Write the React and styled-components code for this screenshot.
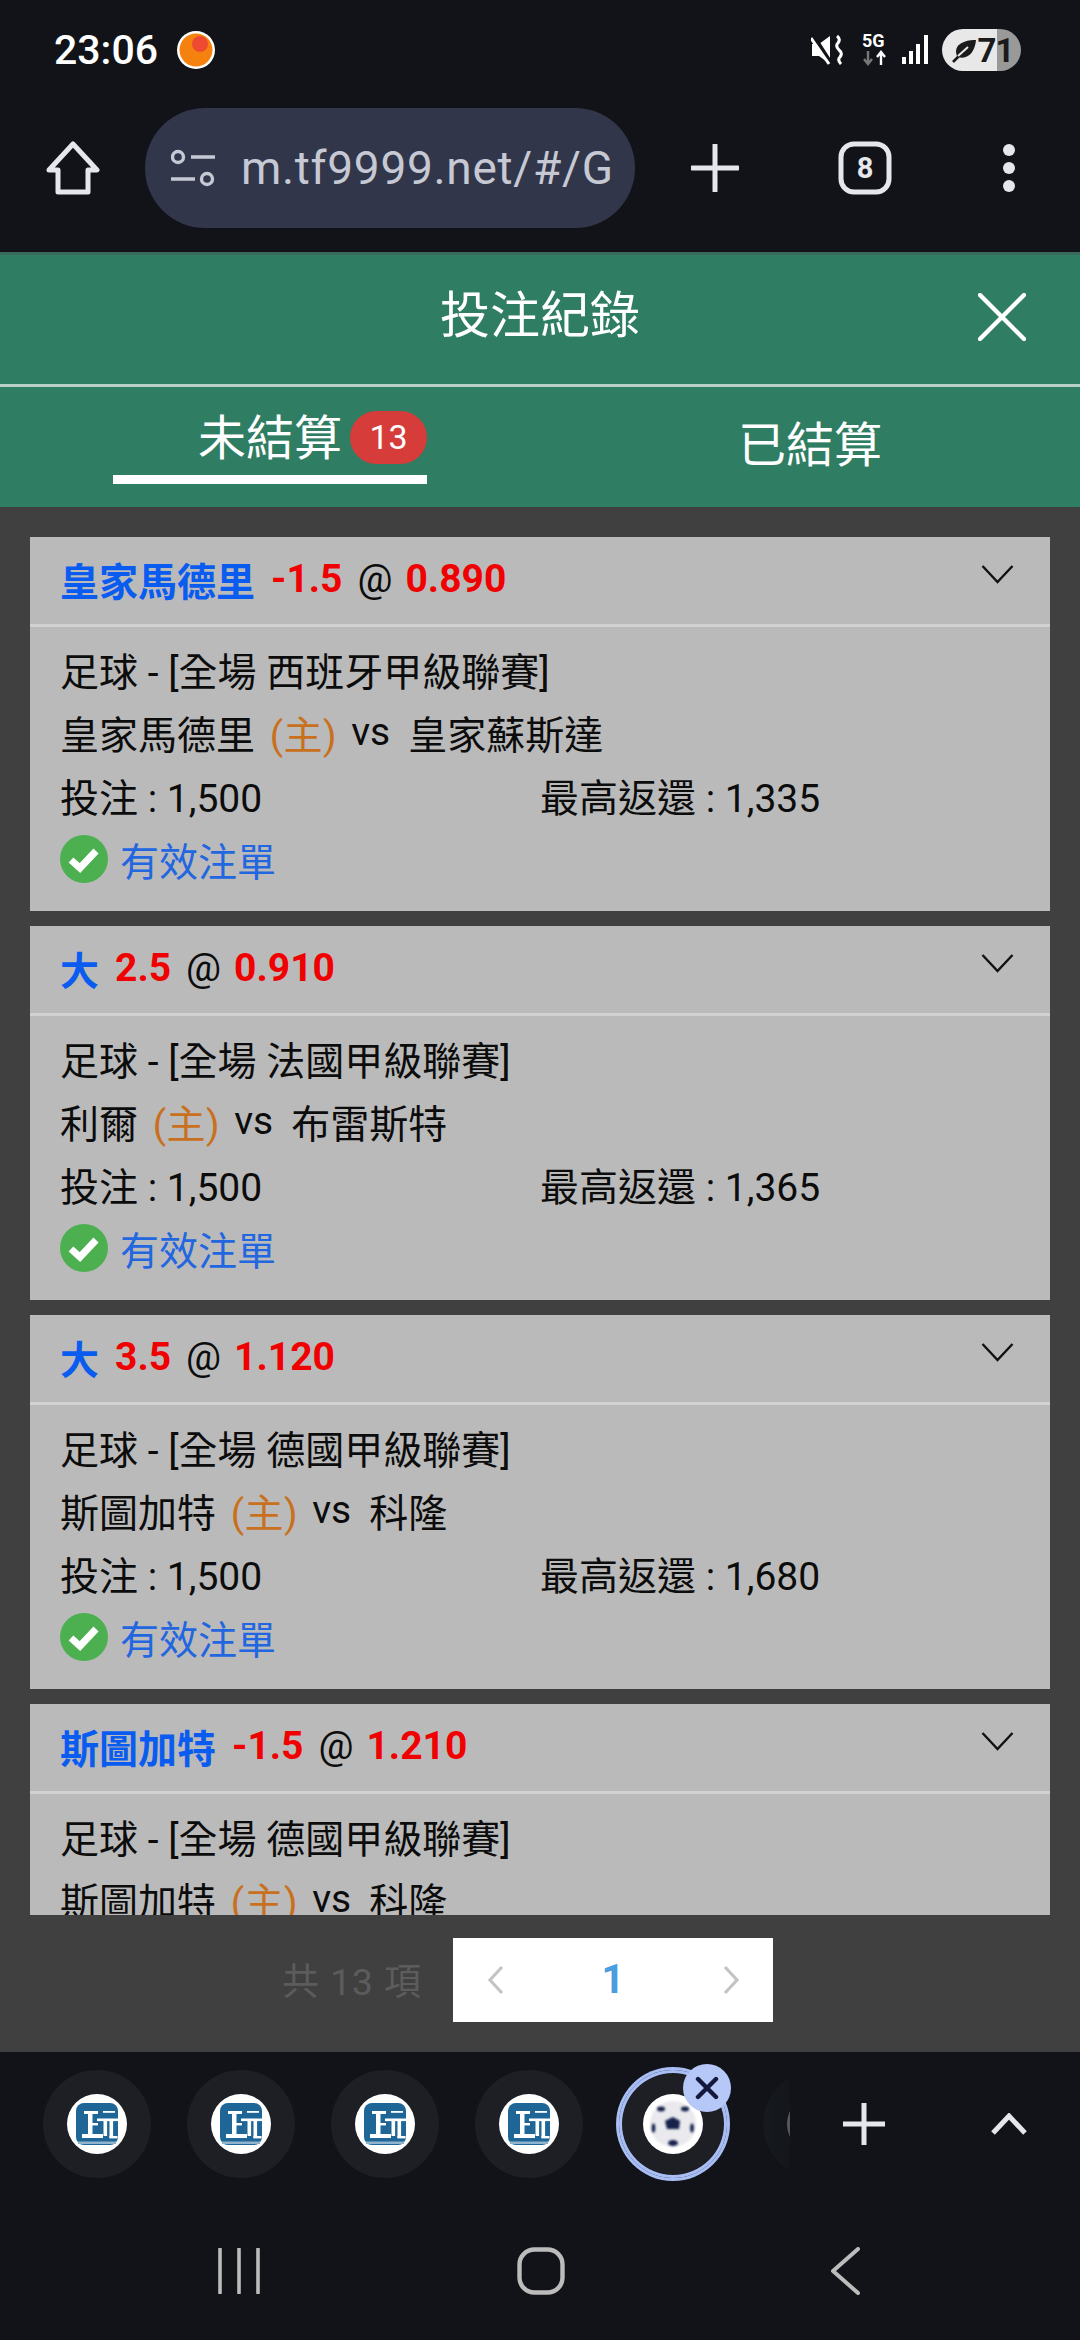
import React from "react";
import styled, { createGlobalStyle } from "styled-components";

const Global = createGlobalStyle`
  html, body { margin: 0; padding: 0; background: #111318; }
  * { box-sizing: border-box; }
  body { font-family: Roboto, "Noto Sans CJK TC", sans-serif; }
`;
const Screen = styled.div`
  width: 1080px; height: 2340px; display: flex; flex-direction: column; overflow: hidden; background: #111318;
`;
const StatusBar = styled.div`
  height: 100px; display: flex; align-items: center; justify-content: space-between; padding: 0 59px 0 54px; color: #fff;
`;
const StatusLeft = styled.div`display: flex; align-items: center; gap: 19px;`;
const Clock = styled.span`font-size: 41px; font-weight: 500; width: 104px; white-space: nowrap;`;
const StatusRight = styled.div`display: flex; align-items: center;`;
const Battery = styled.div`
  width: 79px; height: 42px; border-radius: 21px; margin-left: 12px; display: flex; align-items: center; justify-content: center;
  background: linear-gradient(90deg, #e8e8e8 0 55px, #999 55px); color: #1a1a1c; font-size: 33px; font-weight: 700; letter-spacing: -1px;
`;
const Toolbar = styled.div`height: 152px; padding-top: 8px; display: flex; align-items: flex-start;`;
const ToolSlot = styled.div`
  width: ${p => p.$w}px; height: 120px; padding-left: ${p => p.$nudge || 0}px; display: flex; align-items: center; justify-content: center;
`;
const UrlPill = styled.div`
  width: 490px; height: 120px; border-radius: 60px; background: #31364a; display: flex; align-items: center; padding-left: 26px; gap: 26px;
  color: #c6c9d4; font-size: 46px; letter-spacing: 0.7px; white-space: nowrap; overflow: hidden;
`;
const Header = styled.div`
  height: 135px; border-top: 3px solid #3a6b5a; background: #2f7e63; border-bottom: 3px solid #b9d0c6; padding-bottom: 17px;
  display: flex; align-items: center; justify-content: center; position: relative; color: #fff; font-size: 50px;
`;
const Close = styled.div`position: absolute; right: 54px; top: 38px; width: 48px; height: 48px; display: flex;`;
const Tabs = styled.div`height: 120px; background: #2f7e63; display: grid; grid-template-columns: 1fr 1fr;`;
const Tab = styled.div`display: flex; justify-content: center; color: #fff; font-size: 48px;`;
const TabInner = styled.div`
  height: 97px; display: flex; align-items: ${p => p.$active ? "flex-start" : "center"}; gap: 8px;
  padding: ${p => p.$active ? "26px 0 0 85px" : "22px 0 0"}; width: ${p => p.$active ? "314px" : "auto"};
  border-bottom: ${p => p.$active ? "9px solid #fff" : "0"}; line-height: 1.1;
`;
const Badge = styled.span`
  width: 77px; height: 53px; margin-top: -2px; border-radius: 27px; background: #d53c3a; color: #fff; font-size: 34px;
  display: flex; align-items: center; justify-content: center;
`;
const List = styled.div`
  height: 1408px; background: #404040; padding: 30px 30px 0; display: flex; flex-direction: column; gap: 15px; overflow: hidden;
`;
const Card = styled.div`flex: none; height: 374px; background: #bababa; color: #0c0c0c; font-size: 39px;`;
const CardHead = styled.div`
  height: 90px; border-bottom: 3px solid #d2d2d2; padding: 0 36px 3px 30px; display: flex; align-items: center; justify-content: space-between;
  font-weight: 700;
`;
const HeadText = styled.div`display: flex; gap: 16px; white-space: nowrap; align-items: center; font-size: 39px;`;
const Team = styled.span`color: #0a5cf0;`;
const Odds = styled.span`color: #f00000;`;
const At = styled.span`color: #0c0c0c; font-weight: 400; margin: 0 -3px 0 -1px;`;
const Chevron = styled.svg`width: 33px; height: 21px; margin-top: -10px;`;
const CardBody = styled.div`padding: 10px 0 22px 30px;`;
const Row = styled.div`height: 63px; display: flex; align-items: center; white-space: pre;`;
const AmountRow = styled(Row)`display: grid; grid-template-columns: 480px 1fr;`;
const HomeTag = styled.span`color: #c8701e; margin: 0 14px 0 5px; letter-spacing: 0.5px;`;
const Versus = styled.span`margin-right: 18px;`;
const StatusRow = styled(Row)`color: #2266e0; gap: 12px; padding-top: 2px;`;
const Pager = styled.div`
  height: 137px; background: #404040; display: flex; align-items: center; padding: 0 0 0 282px; gap: 31px;
`;
const Count = styled.span`color: #5c5c5c; font-size: 37px; letter-spacing: 1px; white-space: nowrap; width: 140px; margin-bottom: 10px;`;
const PageBox = styled.div`
  width: 320px; height: 84px; margin-bottom: 7px; background: #fff; display: grid; grid-template-columns: 85px 1fr 85px; align-items: center; justify-items: center;
`;
const PageNum = styled.span`color: #4a9de0; font-size: 40px; font-weight: 700; line-height: 1;`;
const BottomBar = styled.div`height: 144px; display: flex; align-items: flex-start;`;
const Strip = styled.div`
  width: 790px; height: 144px; display: flex; gap: 36px; padding: 18px 0 0 43px; overflow: hidden; flex: none;
  mask-image: linear-gradient(90deg, #000 0 765px, rgba(0,0,0,.5) 790px);
`;
const Bubble = styled.div`
  position: relative; flex: none; width: 108px; height: 108px; border-radius: 50%; background: #1d1f24;
  display: flex; align-items: center; justify-content: center;
  ${p => p.$active && `box-shadow: 0 0 0 3px #a9bef5, inset 0 0 0 3px #a9bef5;`}
  ${p => p.$dim && `opacity: .55;`}
`;
const Favicon = styled.div`
  width: 60px; height: 60px; border-radius: 50%; background: #fff; display: flex; align-items: center; justify-content: center; overflow: hidden;
`;
const CloseBadge = styled.div`
  position: absolute; right: -4px; top: -6px; width: 48px; height: 48px; border-radius: 50%; background: #b6c8f8;
  display: flex; align-items: center; justify-content: center;
`;
const BarSlot = styled.div`
  width: ${p => p.$w}px; height: 144px; display: flex; align-items: center; justify-content: center;
`;
const Nav = styled.div`height: 144px; padding: 6px 0 0 44px; display: grid; grid-template-columns: 390px 214px 394px; align-items: center; justify-items: center;`;

const Logo = () => (
  <svg width="42" height="42" viewBox="0 0 42 42">
    <rect width="42" height="42" rx="8" fill="#1d6696" />
    <rect x="2" y="38.5" width="38" height="2.5" fill="#8fb4cc" />
    <g fill="#fff">
      <rect x="27" y="8" width="12" height="1.8" />
      <rect x="8" y="8" width="14" height="3" />
      <rect x="21" y="15.5" width="21" height="2.6" />
      <rect x="12" y="8" width="4.5" height="25" />
      <rect x="14" y="20" width="8" height="2.4" />
      <rect x="6" y="31" width="21" height="4" />
      <rect x="27.5" y="17" width="3.6" height="16" />
      <rect x="33.5" y="17" width="3.6" height="18" />
      <rect x="33.5" y="33" width="8" height="2.4" />
    </g>
  </svg>
);
const Ball = () => (
  <svg width="60" height="60" viewBox="0 0 60 60">
    <defs><filter id="b"><feGaussianBlur stdDeviation="1.2" /></filter></defs>
    <circle cx="30" cy="30" r="23" fill="#e9e9ee" filter="url(#b)" />
    <g fill="#14204a" filter="url(#b)">
      <polygon points="30,23 37,27 36,35 24,35 22,27" />
      <ellipse cx="18" cy="15" rx="4" ry="2.4" />
      <ellipse cx="42" cy="15" rx="4" ry="2.4" />
      <ellipse cx="10.5" cy="34" rx="1.8" ry="4.5" />
      <ellipse cx="49" cy="34" rx="1.8" ry="4.5" />
      <ellipse cx="30" cy="49" rx="5" ry="3" />
    </g>
  </svg>
);
const Check = () => (
  <svg width="48" height="48" viewBox="0 0 48 48">
    <circle cx="24" cy="24" r="24" fill="#4caf50" />
    <path d="M11 25 L20 33 L36 16" fill="none" stroke="#fff" strokeWidth="7" />
  </svg>
);
const DownChevron = () => (
  <Chevron viewBox="0 0 33 21"><path d="M1.5 2 L16.5 18 L31.5 2" fill="none" stroke="#111" strokeWidth="2.4" /></Chevron>
);
const PageArrow = ({ flip }) => (
  <svg width="18" height="30" viewBox="0 0 18 30">
    <path d={flip ? "M3 2 L15 15 L3 28" : "M15 2 L3 15 L15 28"} fill="none" stroke="#c4c4c4" strokeWidth="3.2" />
  </svg>
);

const bets = [
  { team: "皇家馬德里", line: "-1.5", odds: "0.890", league: "西班牙甲級聯賽", home: "皇家馬德里", away: "皇家蘇斯達", ret: "1,335" },
  { team: "大", line: "2.5", odds: "0.910", league: "法國甲級聯賽", home: "利爾", away: "布雷斯特", ret: "1,365" },
  { team: "大", line: "3.5", odds: "1.120", league: "德國甲級聯賽", home: "斯圖加特", away: "科隆", ret: "1,680" },
  { team: "斯圖加特", line: "-1.5", odds: "1.210", league: "德國甲級聯賽", home: "斯圖加特", away: "科隆", ret: "1,500" },
];

export default function App() {
  return (
    <Screen>
      <Global />
      <StatusBar>
        <StatusLeft>
          <Clock>23:06</Clock>
          <svg width="38" height="38" viewBox="0 0 38 38">
            <circle cx="19" cy="19" r="19" fill="#fff" />
            <circle cx="19" cy="19" r="16.5" fill="#f5820f" />
            <circle cx="23" cy="13" r="8" fill="#ee4a32" />
          </svg>
        </StatusLeft>
        <StatusRight>
          <svg width="32" height="30" viewBox="0 0 32 30" style={{ marginRight: 18 }}>
            <path d="M1 9 H8 L19 1 V29 L8 21 H1 Z" fill="#fff" />
            <path d="M2 1 L20 29" stroke="#111318" strokeWidth="5" />
            <path d="M0 3 L18 29" stroke="#fff" strokeWidth="3" />
            <path d="M26 1 q4 3 1 7 q-3 3 1 7 q4 3 1 7 q-3 3 1 7" fill="none" stroke="#fff" strokeWidth="3" />
          </svg>
          <svg width="28" height="34" viewBox="0 0 28 34" style={{ marginRight: 13 }}>
            <text x="1" y="14" fontFamily="Roboto" fontWeight="700" fontSize="18" fill="#fff">5G</text>
            <path d="M7 18 V31 M3 26 L7 31 L11 26" fill="none" stroke="#777" strokeWidth="2.4" />
            <path d="M20 32 V19 M16 24 L20 19 L24 24" fill="none" stroke="#fff" strokeWidth="2.4" />
          </svg>
          <svg width="28" height="30" viewBox="0 0 28 30">
            <g fill="#fff">
              <rect x="0" y="22" width="4" height="7" />
              <rect x="7" y="16" width="4" height="13" />
              <rect x="14" y="9" width="4" height="20" />
              <rect x="22" y="0" width="4" height="29" />
            </g>
          </svg>
          <Battery>
            <svg width="28" height="28" viewBox="0 0 28 28">
              <path d="M7 20 C3 10 12 4 26 4 C25 16 18 24 8 21 Z" fill="#1a1a1c" />
              <path d="M3 26 L18 11" stroke="#1a1a1c" strokeWidth="2.6" />
              <path d="M8 20 L18 11" stroke="#e8e8e8" strokeWidth="2" />
            </svg>
            71
          </Battery>
        </StatusRight>
      </StatusBar>

      <Toolbar>
        <ToolSlot $w={145}>
          <svg width="54" height="54" viewBox="0 0 54 54">
            <path d="M27 3 L51 29 H42 V51 H12 V29 H3 Z" fill="none" stroke="#e6e7ec" strokeWidth="5" strokeLinejoin="round" />
          </svg>
        </ToolSlot>
        <UrlPill>
          <svg width="44" height="38" viewBox="0 0 44 38" style={{ flex: "none" }}>
            <circle cx="7" cy="8" r="5.5" fill="none" stroke="#c6c9d4" strokeWidth="3.4" />
            <path d="M20 8 H44 M0 30 H24" stroke="#c6c9d4" strokeWidth="3.6" />
            <circle cx="36" cy="30" r="5.5" fill="none" stroke="#c6c9d4" strokeWidth="3.4" />
          </svg>
          m.tf9999.net/#/G
        </UrlPill>
        <ToolSlot $w={159}>
          <svg width="48" height="48" viewBox="0 0 48 48"><path d="M24 1 V47 M1 24 H47" stroke="#e6e7ec" strokeWidth="5" strokeLinecap="round" /></svg>
        </ToolSlot>
        <ToolSlot $w={141}>
          <svg width="54" height="54" viewBox="0 0 54 54">
            <rect x="3" y="3" width="48" height="48" rx="13" fill="none" stroke="#e6e7ec" strokeWidth="5" />
            <text x="27" y="37" textAnchor="middle" fontFamily="Roboto" fontWeight="700" fontSize="29" fill="#e6e7ec">8</text>
          </svg>
        </ToolSlot>
        <ToolSlot $w={145} $nudge={3}>
          <svg width="14" height="48" viewBox="0 0 14 48" fill="#e6e7ec">
            <circle cx="7" cy="6" r="6" /><circle cx="7" cy="24" r="6" /><circle cx="7" cy="42" r="6" />
          </svg>
        </ToolSlot>
      </Toolbar>

      <Header>
        <span>投注紀錄</span>
        <Close>
          <svg width="48" height="48" viewBox="0 0 48 48"><path d="M2 2 L46 46 M46 2 L2 46" stroke="#fff" strokeWidth="4.4" strokeLinecap="round" /></svg>
        </Close>
      </Header>
      <Tabs>
        <Tab>
          <TabInner $active>未結算<Badge>13</Badge></TabInner>
        </Tab>
        <Tab><TabInner>已結算</TabInner></Tab>
      </Tabs>

      <List>
        {bets.map((b, i) => (
          <Card key={i}>
            <CardHead>
              <HeadText>
                <Team>{b.team}</Team>
                <Odds>{b.line}</Odds>
                <At>@</At>
                <Odds>{b.odds}</Odds>
              </HeadText>
              <DownChevron />
            </CardHead>
            <CardBody>
              <Row>足球 - [全場 {b.league}]</Row>
              <Row>{b.home} <HomeTag>(主)</HomeTag><Versus>vs</Versus>{b.away}</Row>
              <AmountRow><span>投注 : 1,500</span><span>最高返還 : {b.ret}</span></AmountRow>
              <StatusRow><Check />有效注單</StatusRow>
            </CardBody>
          </Card>
        ))}
      </List>

      <Pager>
        <Count>共 13 項</Count>
        <PageBox>
          <PageArrow />
          <PageNum>1</PageNum>
          <PageArrow flip />
        </PageBox>
      </Pager>

      <BottomBar>
        <Strip>
          {[0, 1, 2, 3].map(i => (
            <Bubble key={i}><Favicon><Logo /></Favicon></Bubble>
          ))}
          <Bubble $active>
            <Favicon><Ball /></Favicon>
            <CloseBadge>
              <svg width="24" height="24" viewBox="0 0 24 24"><path d="M3 3 L21 21 M21 3 L3 21" stroke="#14183a" strokeWidth="4.4" strokeLinecap="round" /></svg>
            </CloseBadge>
          </Bubble>
          <Bubble $dim><Favicon /></Bubble>
        </Strip>
        <BarSlot $w={148}>
          <svg width="42" height="42" viewBox="0 0 42 42"><path d="M21 0 V42 M0 21 H42" stroke="#e6e7ec" strokeWidth="5" /></svg>
        </BarSlot>
        <BarSlot $w={142}>
          <svg width="36" height="22" viewBox="0 0 36 22"><path d="M2 20 L18 3 L34 20" fill="none" stroke="#e6e7ec" strokeWidth="5" /></svg>
        </BarSlot>
      </BottomBar>

      <Nav>
        <svg width="44" height="46" viewBox="0 0 44 46"><path d="M3 1 V45 M22 1 V45 M41 1 V45" stroke="#bcbcbc" strokeWidth="3.6" strokeLinecap="round" /></svg>
        <svg width="48" height="48" viewBox="0 0 48 48"><rect x="2.5" y="2.5" width="43" height="43" rx="15" fill="none" stroke="#bcbcbc" strokeWidth="4.4" /></svg>
        <svg width="30" height="48" viewBox="0 0 30 48"><path d="M28 2 L3 24 L28 46" fill="none" stroke="#bcbcbc" strokeWidth="4" strokeLinecap="round" strokeLinejoin="round" /></svg>
      </Nav>
    </Screen>
  );
}
